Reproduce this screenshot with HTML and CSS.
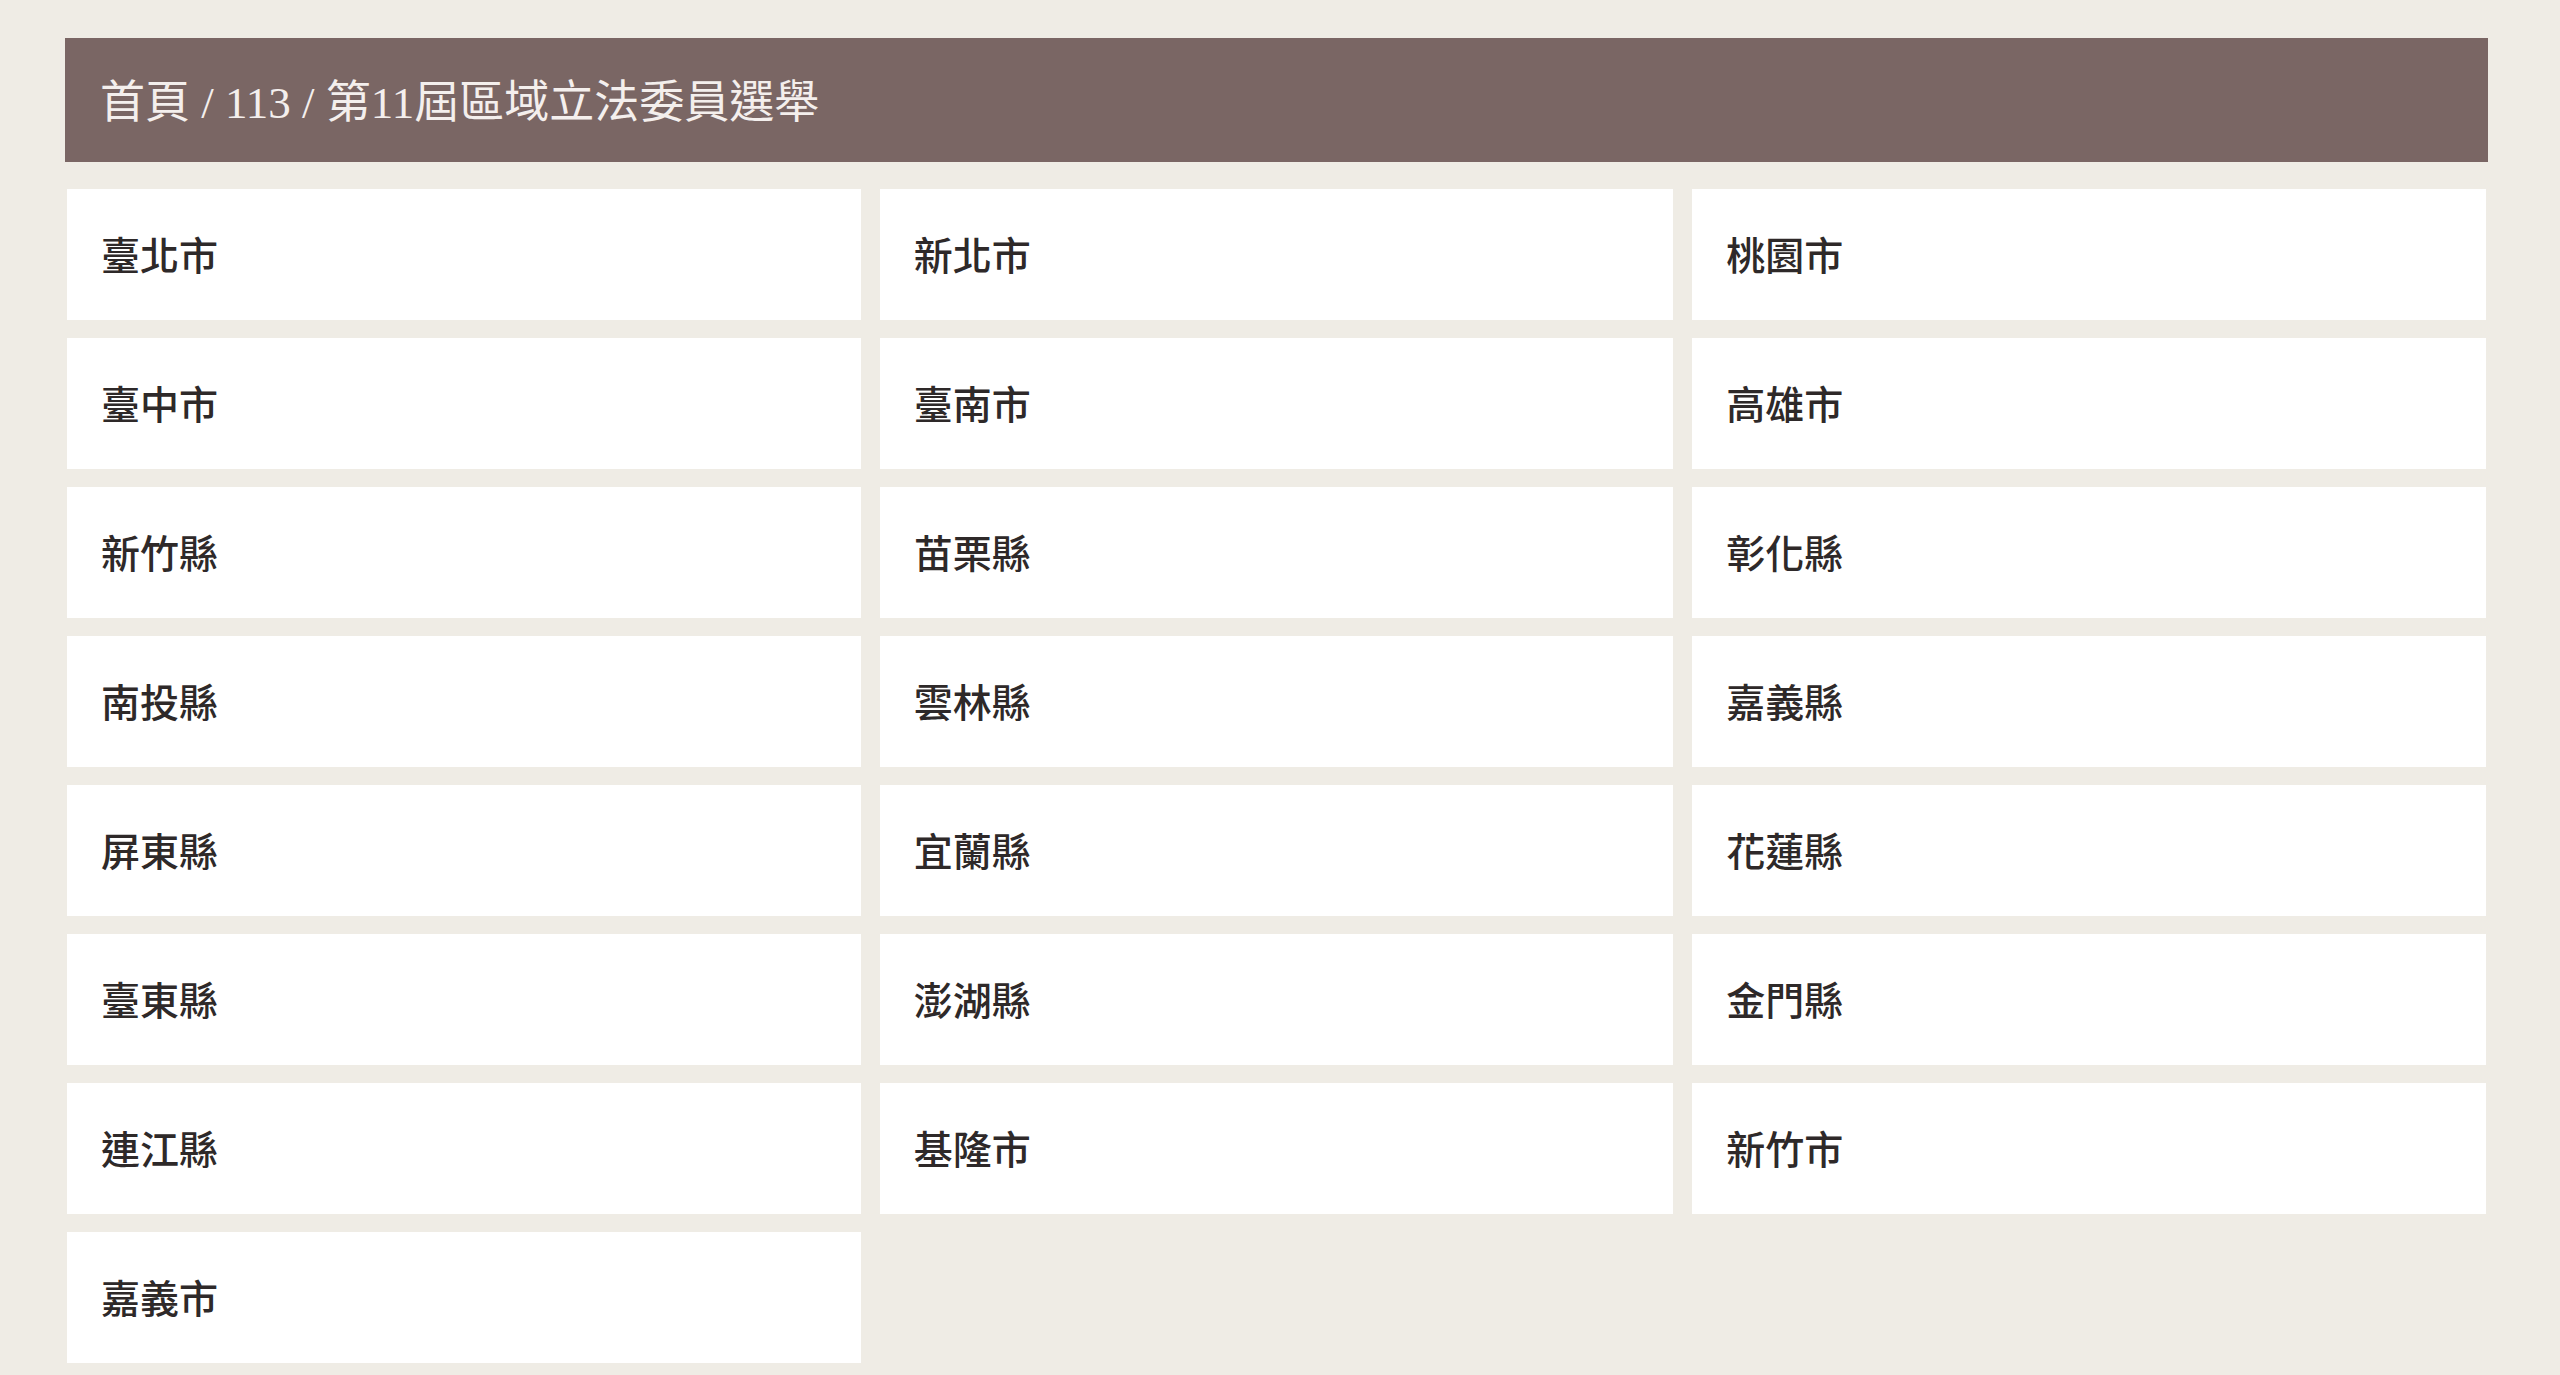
FILE: index.html
```html
<!DOCTYPE html>
<html lang="zh-Hant">
<head>
    <meta charset="UTF-8">
    <meta name="viewport" content="width=device-width, initial-scale=1.0">
    <title>第11屆區域立法委員選舉</title>
    <link rel="stylesheet" href="styles.css">
</head>
<body>
    <div class="page">
        <div class="breadcrumb">首頁 / 113 / 第11屆區域立法委員選舉</div>
        <div class="area-list">
            <a class="area-card" href="#">臺北市</a>
            <a class="area-card" href="#">新北市</a>
            <a class="area-card" href="#">桃園市</a>
            <a class="area-card" href="#">臺中市</a>
            <a class="area-card" href="#">臺南市</a>
            <a class="area-card" href="#">高雄市</a>
            <a class="area-card" href="#">新竹縣</a>
            <a class="area-card" href="#">苗栗縣</a>
            <a class="area-card" href="#">彰化縣</a>
            <a class="area-card" href="#">南投縣</a>
            <a class="area-card" href="#">雲林縣</a>
            <a class="area-card" href="#">嘉義縣</a>
            <a class="area-card" href="#">屏東縣</a>
            <a class="area-card" href="#">宜蘭縣</a>
            <a class="area-card" href="#">花蓮縣</a>
            <a class="area-card" href="#">臺東縣</a>
            <a class="area-card" href="#">澎湖縣</a>
            <a class="area-card" href="#">金門縣</a>
            <a class="area-card" href="#">連江縣</a>
            <a class="area-card" href="#">基隆市</a>
            <a class="area-card" href="#">新竹市</a>
            <a class="area-card" href="#">嘉義市</a>
        </div>
    </div>
</body>
</html>
```

FILE: styles.css
```css
body {
    margin: 0;
    background-color: #efece5;
    font-family: "Noto Sans CJK TC", sans-serif;
}
.page {
    padding: 38px 72px 0 65px;
}
.breadcrumb {
    height: 124px;
    display: flex;
    align-items: center;
    padding: 0 0 3px 35px;
    box-sizing: border-box;
    background-color: #7a6664;
    color: #f4efed;
    font-family: "Liberation Serif", "Noto Sans CJK TC", serif;
    font-size: 45px;
}
.area-list {
    display: grid;
    grid-template-columns: repeat(3, 1fr);
    column-gap: 19px;
    row-gap: 18px;
    margin: 27px 2px 0 2px;
}
.area-card {
    height: 131px;
    box-sizing: border-box;
    display: flex;
    align-items: center;
    padding: 0 0 3px 34px;
    background-color: #fff;
    color: #2e2929;
    font-size: 39px;
    font-weight: 500;
    text-decoration: none;
}
.area-card:hover {
    background-color: #f8f6f2;
}
```
